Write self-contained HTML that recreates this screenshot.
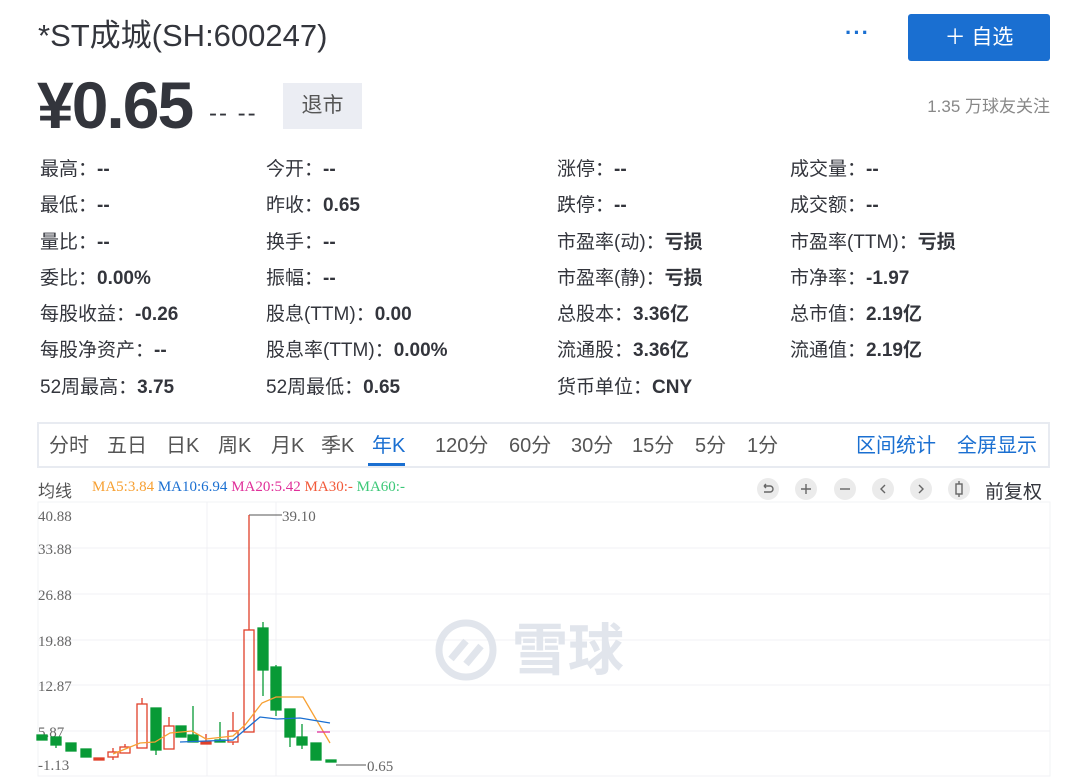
<!DOCTYPE html>
<html><head><meta charset="utf-8"><style>
*{margin:0;padding:0;box-sizing:border-box}
html,body{width:1080px;height:778px;overflow:hidden}
body{background:#fff;font-family:"Liberation Sans","Noto Sans CJK SC",sans-serif;color:#33353c;position:relative}
.a{position:absolute;white-space:nowrap}
.st{font-size:19px;color:#33353c;line-height:22px}
.st b{font-weight:bold}
.tab{font-size:20px;color:#555;top:434px;line-height:24px}
</style></head><body>
<div class="a" style="left:38px;top:17px;font-size:31px;line-height:38px;color:#33353c">*ST成城(SH:600247)</div>
<div class="a" style="left:845px;top:20px;font-size:22px;color:#1a6fd1;font-weight:bold;letter-spacing:1px">···</div>
<div class="a" style="left:908px;top:14px;width:142px;height:47px;background:#1a6fd1;border-radius:3px;color:#fff;font-size:21px;line-height:47px;text-align:center">＋ 自选</div>
<div class="a" style="left:37px;top:70px;font-size:66px;font-weight:bold;line-height:70px;color:#33353c;letter-spacing:-2px">¥0.65</div>
<div class="a" style="left:209px;top:100px;font-size:24px;color:#33353c;letter-spacing:2px">-- --</div>
<div class="a" style="left:283px;top:83px;width:79px;height:46px;background:#ebedf3;color:#555;font-size:21px;line-height:46px;text-align:center">退市</div>
<div class="a" style="right:30px;top:92px;font-size:17px;color:#888">1.35 万球友关注</div>

<div class="a st" style="left:40px;top:159px">最高：<b>--</b></div>
<div class="a st" style="left:266px;top:159px">今开：<b>--</b></div>
<div class="a st" style="left:557px;top:159px">涨停：<b>--</b></div>
<div class="a st" style="left:790px;top:159px">成交量：<b>--</b></div>
<div class="a st" style="left:40px;top:195px">最低：<b>--</b></div>
<div class="a st" style="left:266px;top:195px">昨收：<b>0.65</b></div>
<div class="a st" style="left:557px;top:195px">跌停：<b>--</b></div>
<div class="a st" style="left:790px;top:195px">成交额：<b>--</b></div>
<div class="a st" style="left:40px;top:232px">量比：<b>--</b></div>
<div class="a st" style="left:266px;top:232px">换手：<b>--</b></div>
<div class="a st" style="left:557px;top:232px">市盈率(动)：<b>亏损</b></div>
<div class="a st" style="left:790px;top:232px">市盈率(TTM)：<b>亏损</b></div>
<div class="a st" style="left:40px;top:268px">委比：<b>0.00%</b></div>
<div class="a st" style="left:266px;top:268px">振幅：<b>--</b></div>
<div class="a st" style="left:557px;top:268px">市盈率(静)：<b>亏损</b></div>
<div class="a st" style="left:790px;top:268px">市净率：<b>-1.97</b></div>
<div class="a st" style="left:40px;top:304px">每股收益：<b>-0.26</b></div>
<div class="a st" style="left:266px;top:304px">股息(TTM)：<b>0.00</b></div>
<div class="a st" style="left:557px;top:304px">总股本：<b>3.36亿</b></div>
<div class="a st" style="left:790px;top:304px">总市值：<b>2.19亿</b></div>
<div class="a st" style="left:40px;top:340px">每股净资产：<b>--</b></div>
<div class="a st" style="left:266px;top:340px">股息率(TTM)：<b>0.00%</b></div>
<div class="a st" style="left:557px;top:340px">流通股：<b>3.36亿</b></div>
<div class="a st" style="left:790px;top:340px">流通值：<b>2.19亿</b></div>
<div class="a st" style="left:40px;top:377px">52周最高：<b>3.75</b></div>
<div class="a st" style="left:266px;top:377px">52周最低：<b>0.65</b></div>
<div class="a st" style="left:557px;top:377px">货币单位：<b>CNY</b></div>

<div class="a" style="left:37px;top:422px;width:1013px;height:46px;border:2px solid #e8ebf1"></div>
<div class="a tab" style="left:49px">分时</div>
<div class="a tab" style="left:107px">五日</div>
<div class="a tab" style="left:166px">日K</div>
<div class="a tab" style="left:218px">周K</div>
<div class="a tab" style="left:271px">月K</div>
<div class="a tab" style="left:321px">季K</div>
<div class="a tab" style="left:372px;color:#1a6fd1">年K</div>
<div class="a" style="left:368px;top:463px;width:37px;height:3px;background:#1a6fd1"></div>
<div class="a tab" style="left:435px">120分</div>
<div class="a tab" style="left:509px">60分</div>
<div class="a tab" style="left:571px">30分</div>
<div class="a tab" style="left:632px">15分</div>
<div class="a tab" style="left:695px">5分</div>
<div class="a tab" style="left:747px">1分</div>
<div class="a tab" style="left:856px;color:#1a6fd1">区间统计</div>
<div class="a tab" style="left:957px;color:#1a6fd1">全屏显示</div>

<div class="a" style="left:38px;top:477px;font-size:17px;color:#555">均线</div>
<div class="a" style="left:92px;top:479px;font-size:15px;font-family:'Liberation Serif',serif"><span style="color:#f7a032">MA5:3.84</span> <span style="color:#1a6fd1">MA10:6.94</span> <span style="color:#e0309a">MA20:5.42</span> <span style="color:#f25a3a">MA30:-</span> <span style="color:#3cc878">MA60:-</span></div>
<svg class="a" style="left:755px;top:476px" width="220" height="26">
<g fill="#ebebeb"><circle cx="13" cy="13" r="11"/><circle cx="51" cy="13" r="11"/><circle cx="90" cy="13" r="11"/><circle cx="128" cy="13" r="11"/><circle cx="166" cy="13" r="11"/><circle cx="204" cy="13" r="11"/></g>
<g stroke="#666" stroke-width="1.4" fill="none">
<path d="M9 10h6a3 3 0 0 1 0 6h-6M9 10l2-2M9 10l2 2"/>
<path d="M46 13h10M51 8v10"/><path d="M85 13h10"/>
<path d="M130 9l-4 4 4 4"/><path d="M164 9l4 4-4 4"/>
<rect x="201" y="8" width="6" height="10"/><path d="M204 5v3M204 18v3"/></g></svg>
<div class="a" style="left:985px;top:477px;font-size:19px;color:#33353c">前复权</div>

<svg class="a" style="left:0;top:500px" width="1080" height="278">
<rect x="38" y="2" width="1012" height="274" fill="none" stroke="#f2f3f6"/>
<g stroke="#f0f1f4"><path d="M38 48H1050M38 94H1050M38 140H1050M38 185H1050M38 231H1050M38 276H1050M207 2V276M276 2V276"/></g>
<g font-family="Liberation Serif,serif" font-size="15" fill="#666">
<text x="38" y="21">40.88</text><text x="38" y="54">33.88</text><text x="38" y="100">26.88</text><text x="38" y="146">19.88</text><text x="38" y="191">12.87</text><text x="38" y="237">5.87</text><text x="38" y="270">-1.13</text>
<text x="282" y="21">39.10</text><text x="367" y="271">0.65</text></g>
<path d="M249 15H282M336 265H366" stroke="#555" fill="none"/>
<g fill="none" stroke-width="1.3">
<g stroke="#e0402a">
<path d="M113 252v-4M113 257v3M125 247v-3M142 204v-6M169 226v-9M206 242v-8M233 231v-19M233 242v3M249 130V15"/>
<rect x="94" y="258" width="10" height="2" fill="#e0402a"/><rect x="108" y="252" width="10" height="5"/><rect x="120" y="247" width="10" height="6"/><rect x="137" y="204" width="10" height="44"/><rect x="164" y="226" width="10" height="23"/><rect x="201" y="242" width="10" height="2" fill="#e0402a"/><rect x="228" y="231" width="10" height="11"/><rect x="244" y="130" width="10" height="102"/></g>
<g stroke="#089a36" fill="#089a36">
<path d="M56 245v3M156 250v5M193 235v-29M220 240v-18M263 128v-6M263 170v26M276 167v-2M276 210v6M290 237v10M302 237v-13M302 245v4"/>
<rect x="37" y="235" width="10" height="5"/><rect x="51" y="237" width="10" height="8"/><rect x="66" y="243" width="10" height="8"/><rect x="81" y="249" width="10" height="8"/><rect x="151" y="208" width="10" height="42"/><rect x="176" y="226" width="10" height="11"/><rect x="188" y="235" width="10" height="7"/><rect x="215" y="240" width="10" height="2"/><rect x="258" y="128" width="10" height="42"/><rect x="271" y="167" width="10" height="43"/><rect x="285" y="209" width="10" height="28"/><rect x="297" y="237" width="10" height="8"/><rect x="311" y="243" width="10" height="17"/><rect x="326" y="260" width="10" height="2"/></g>
<path d="M113 254L140 243 155 242 170 233 192 231 206 239 233 236 245 225 262 203 276 197 303 197 330 243" stroke="#f7a032"/>
<path d="M180 242L233 240 260 217 277 219 300 218 330 223" stroke="#1a6fd1"/>
<path d="M317 232H330" stroke="#e0309a"/></g>
<g fill="none" stroke="#e1e5ec" stroke-width="7"><circle cx="466" cy="150" r="27"/><path d="M451 159l15-18M466 164l15-18"/></g>
<text x="512" y="170" font-size="56" font-weight="bold" fill="#e1e5ec" font-family="Noto Sans CJK SC,sans-serif">雪球</text>
</svg>
</body></html>
